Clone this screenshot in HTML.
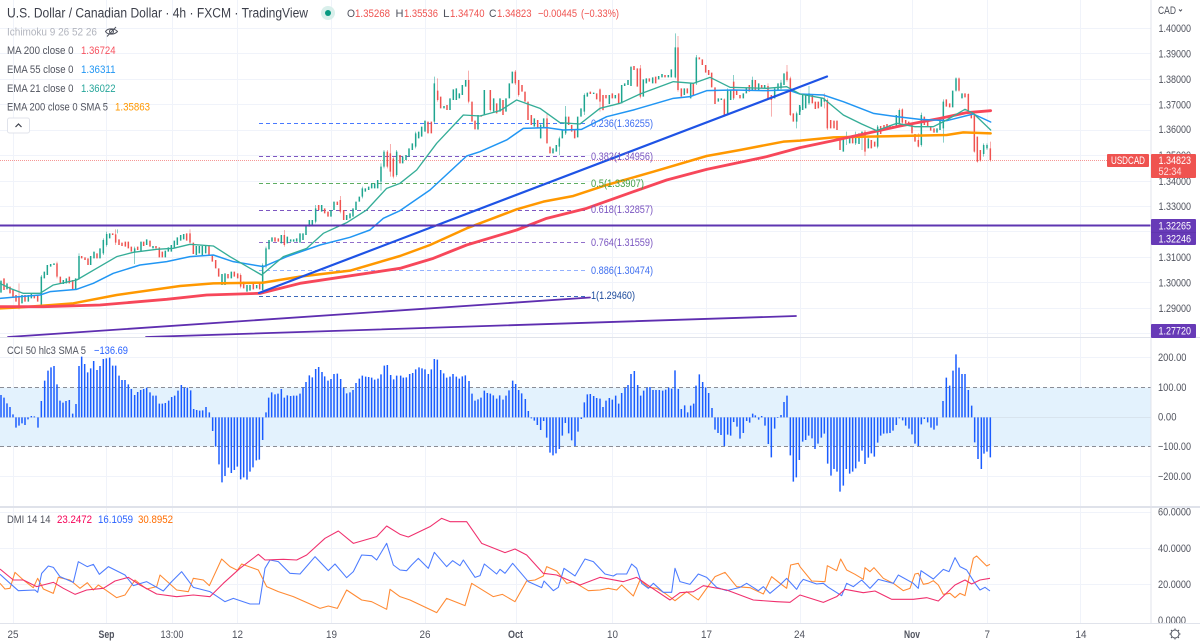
<!DOCTYPE html>
<html><head><meta charset="utf-8"><title>USDCAD</title>
<style>
html,body{margin:0;padding:0;background:#fff;width:1200px;height:643px;overflow:hidden}
svg{display:block}
text{font-family:"Liberation Sans",sans-serif;font-size:11px;fill:#50535e}
.w{fill:#fff}
</style></head><body>
<svg width="1200" height="643" viewBox="0 0 1200 643" xmlns="http://www.w3.org/2000/svg">
<defs>
<clipPath id="m"><rect x="0" y="0" width="1151" height="337"/></clipPath>
</defs>
<rect width="1200" height="643" fill="#fff"/>
<!-- grid -->
<path stroke="#f0f3fa" stroke-width="1" fill="none" d="M0 28.5H1151M0 53.5H1151M0 79.5H1151M0 104.5H1151M0 130.5H1151M0 155.5H1151M0 181.5H1151M0 206.5H1151M0 231.5H1151M0 257.5H1151M0 282.5H1151M0 308.5H1151M0 333.5H1151M0 357.5H1151M0 476.5H1151M0 512.5H1151M0 548.5H1151M0 584.5H1151M13.5 0V623M106.5 0V623M172.5 0V623M237.5 0V623M331.5 0V623M425.5 0V623M516.5 0V623M612.5 0V623M706.5 0V623M800.5 0V623M912.5 0V623M987.5 0V623M1080.5 0V623"/>
<!-- CCI band -->
<rect x="0" y="387.5" width="1151" height="59" fill="#e3f2fd"/>
<path d="M0 387.5H1151M0 446.5H1151" stroke="#8a8d96" stroke-width="1" stroke-dasharray="4 3" fill="none"/>
<path d="M0 417.5H1151" stroke="#d8e4ee" stroke-width="1"/>

<!-- last price line -->
<path d="M0 160.5H1107" stroke="#ef5350" stroke-width="1" stroke-dasharray="1 1" opacity=".6"/>

<!-- fib dashed -->
<g fill="none" stroke-width="1" stroke-dasharray="4 3" opacity=".85">
<path d="M259 123.5H586" stroke="#2962ff"/>
<path d="M259 156.5H586" stroke="#673ab7"/>
<path d="M259 183.5H586" stroke="#43a047"/>
<path d="M259 210.5H586" stroke="#673ab7"/>
<path d="M259 242.5H586" stroke="#7e57c2"/>
<path d="M259 270.5H586" stroke="#82a4ff"/>
<path d="M259 296.5H586" stroke="#1b4fb0"/>
</g>

<g clip-path="url(#m)">
<!-- candles group 1 -->
<g transform="scale(.33333)">
<path fill="none" stroke="#26a69a" stroke-width="2" opacity=".8" d="M124 825V918M237 760V840M404 740V792M788 790V875M798 740V805M353 688V700M1143 490V572M1152 450V505M1190 450V530M947 615V670M1087 560V595M310 715V765M320 695V740"/>
<path fill="none" stroke="#ef5350" stroke-width="2" opacity=".7" d="M57 850V928M347 688V735M570 688V730M853 690V740M1021 588V640M1171 432V530M1162 450V505M1180 470V535M171 785V835M722 820V865"/>
<path fill="none" stroke="#1fa590" stroke-width="4.5" d="M3 842V878M21 850V868M66 885V910M85 885V905M94 882V895M124 830V915M133 815V835M142 795V825M152 792V800M162 790V795M190 840V852M199 835V850M227 835V868M237 768V835M272 768V795M282 755V775M300 745V775M310 720V760M320 702V735M329 700V715M404 745V755M423 725V755M440 718V735M459 738V745M496 752V772M505 742V755M514 735V755M523 722V745M532 712V735M542 705V722M551 702V718M589 738V765M598 738V760M607 738V765M617 735V760M666 822V855M675 820V855M694 815V835M741 855V875M750 855V872M770 855V865M788 795V870M798 745V800M807 720V748M816 712V725M844 705V730M862 710V730M872 718V725M881 718V725M890 715V725M900 700V728M909 700V720M918 675V705M928 660V680M937 660V675M947 625V665M965 615V635M993 630V650M1002 605V630M1040 645V660M1050 640V655M1059 625V650M1068 605V630M1078 590V605M1087 565V590M1096 565V575M1106 560V570M1115 550V565M1124 550V565M1133 540V565M1143 500V545M1152 455V500M1190 455V525"/>
<path fill="none" stroke="#ef5350" stroke-width="4.5" d="M12 835V870M30 860V880M39 870V890M48 885V905M57 890V925M75 885V905M103 885V895M113 885V905M171 790V830M181 830V850M208 830V850M218 840V868M245 768V775M255 772V780M264 775V795M291 760V775M338 700V705M347 703V728M357 718V735M366 728V738M376 725V740M385 725V745M394 740V755M413 740V750M431 725V738M450 722V740M468 738V745M478 742V772M487 755V772M560 700V722M570 700V728M580 728V762M627 735V765M637 765V785M647 780V805M656 805V830M684 822V835M703 815V830M713 820V835M722 825V860M731 845V865M760 852V868M779 850V868M825 712V725M835 715V725M853 705V735M956 615V630M974 625V640M984 635V650M1012 605V615M1021 600V635M1031 630V660M1162 455V500M1171 460V515M1180 475V530"/>
</g>
<!-- candles group 2 -->
<g transform="translate(400,0) scale(.33333)">
<path fill="none" stroke="#26a69a" stroke-width="2" opacity=".8" d="M103 230V370M47 395V445M497 318V405M422 370V415M478 410V465M826 100V235M889 165V255M983 265V345M1190 335V385M1001 225V300M1057 230V272M1143 240V270M553 280V345"/>
<path fill="none" stroke="#ef5350" stroke-width="2" opacity=".7" d="M113 235V305M206 212V310M234 360V390M271 270V335M346 210V255M356 240V290M441 340V430M834 108V275M721 195V295M600 265V335M1104 250V300M1114 285V350M1161 195V245M1171 230V348M973 295V350M609 285V332"/>
<path fill="none" stroke="#1fa590" stroke-width="4.5" d="M8 470V490M18 465V480M27 445V470M37 430V450M47 400V440M56 395V415M65 380V410M75 362V395M103 250V365M132 318V325M150 295V330M160 268V300M169 265V300M178 280V295M187 255V285M197 240V260M234 345V388M253 270V345M281 295V335M300 295V335M318 295V335M328 250V295M337 215V250M403 355V380M422 375V415M431 355V385M459 445V460M469 435V455M478 415V440M487 390V415M497 350V400M533 350V412M543 325V350M553 285V335M562 278V290M581 278V282M628 285V312M646 285V295M665 255V310M674 250V258M684 240V255M693 200V258M730 238V290M739 235V250M758 232V250M776 228V238M786 222V232M805 225V232M814 208V232M826 142V232M853 265V285M872 248V295M889 172V250M955 295V305M964 295V300M983 272V340M992 270V300M1030 280V295M1039 262V280M1057 240V270M1076 250V270M1094 255V265M1124 265V295M1134 250V270M1143 248V265M1152 220V255M1190 340V365M1199 315V345"/>
<path fill="none" stroke="#ef5350" stroke-width="4.5" d="M0 465V490M84 365V400M94 365V400M113 272V300M122 290V325M141 315V330M206 240V305M216 305V365M225 362V388M244 345V350M271 270V330M290 310V340M309 300V345M346 215V250M356 240V285M366 255V275M375 275V305M384 305V360M394 345V375M413 360V385M441 355V430M450 440V460M506 350V375M515 375V395M524 390V415M571 275V282M590 280V298M600 268V305M609 285V330M618 285V295M637 280V295M656 280V310M702 198V210M712 205V260M721 205V290M748 235V245M767 230V250M795 225V232M834 142V270M844 265V290M862 265V280M880 250V285M898 172V178M907 178V195M917 195V218M926 210V225M935 218V262M945 262V312M973 298V345M1001 245V295M1010 270V285M1020 285V295M1048 255V275M1066 240V270M1085 255V265M1104 258V295M1114 285V300M1161 215V240M1171 235V345M1180 340V365"/>
</g>
<!-- candles group 3 -->
<g transform="translate(800,0) scale(.33333)">
<path fill="none" stroke="#26a69a" stroke-width="2" opacity=".8" d="M27 258V315M139 395V435M186 395V450M233 375V445M364 338V440M430 298V428M468 232V275M551 430V470M561 430V450M167 395V435"/>
<path fill="none" stroke="#ef5350" stroke-width="2" opacity=".7" d="M73 280V325M82 295V390M195 390V468M298 325V372M307 325V375M355 400V442M477 232V275M505 280V340M523 342V458M532 410V488M541 450V485M571 425V485"/>
<path fill="none" stroke="#1fa590" stroke-width="4.5" d="M0 320V335M8 285V330M17 285V325M27 280V310M64 295V320M73 295V305M130 410V455M149 410V430M167 410V430M177 400V432M186 395V405M205 415V445M233 380V440M289 345V378M298 330V370M364 345V435M411 385V398M420 355V390M430 305V385M458 272V322M468 235V272M486 280V295M551 435V462M561 435V445"/>
<path fill="none" stroke="#ef5350" stroke-width="4.5" d="M37 285V310M46 305V327M55 305V325M82 300V385M92 360V385M102 362V385M111 362V390M120 410V450M158 405V430M195 395V455M214 420V445M224 425V440M242 378V402M252 375V390M261 372V387M270 375V385M279 378V382M307 328V368M317 360V370M326 365V375M336 375V400M345 402V425M355 420V440M373 350V375M383 362V378M392 378V392M402 385V398M439 298V320M449 310V322M477 235V272M495 280V292M505 282V335M514 340V355M523 345V455M532 410V485M541 450V482M571 445V480"/>
</g>

<!-- moving averages -->
<g fill="none" stroke-linejoin="round" stroke-linecap="round">
<polyline transform="scale(.33333)" stroke="#ff9800" stroke-width="7.5" points="0,925 60,922 220,910 350,885 540,858 640,850 790,848 900,830 1050,812 1200,768 1290,735 1400,685 1550,628 1630,605 1720,588 1820,555 1960,515 2120,468 2220,450 2350,425 2400,422 2500,412 2600,410 2700,408 2840,405 2890,397 2972,400"/>
<polyline transform="scale(.33333)" stroke="#f7475a" stroke-width="8.5" points="0,920 130,920 300,915 500,898 620,885 780,880 900,850 1000,835 1200,805 1300,775 1400,735 1550,690 1640,655 1760,625 1900,575 2000,540 2120,508 2300,470 2400,443 2500,422 2600,400 2700,378 2820,355 2900,338 2972,332"/>
<polyline transform="scale(.33333)" stroke="#2196f3" stroke-width="4.5" points="0,895 60,890 120,885 150,875 230,868 280,850 340,820 420,795 500,785 570,770 640,765 700,785 790,800 860,770 960,735 1050,712 1110,690 1150,655 1200,632 1290,570 1400,468 1440,455 1520,420 1570,385 1640,383 1690,390 1745,388 1820,350 1900,330 2020,295 2070,290 2120,272 2200,270 2300,272 2365,270 2400,282 2470,285 2530,305 2620,340 2690,350 2760,358 2840,362 2920,342 2972,366"/>
<polyline transform="scale(.33333)" stroke="#35ad97" stroke-width="4" points="0,850 30,865 70,880 120,880 160,855 230,840 290,805 350,770 400,757 470,748 520,745 570,733 640,738 690,770 785,825 850,770 920,745 970,700 1040,668 1100,630 1160,565 1200,550 1250,510 1310,430 1390,345 1440,348 1500,332 1550,300 1620,325 1680,368 1740,372 1800,325 1860,310 1920,282 2020,245 2080,250 2130,232 2190,262 2300,265 2360,260 2400,282 2470,295 2530,345 2585,372 2630,392 2690,370 2745,380 2800,380 2840,360 2895,328 2920,340 2972,390"/>
<!-- trend + horizontal -->
<path d="M259 293L827 76.5" stroke="#1e53e5" stroke-width="2.2"/>
<path d="M8 337L590 297.5" stroke="#5e2eb0" stroke-width="1.8"/>
<path d="M146 337L796 316" stroke="#5e2eb0" stroke-width="1.8"/>
<path d="M0 225.5H1151" stroke="#5e35b1" stroke-width="2"/>
</g>
</g>

<!-- fib labels -->
<text x="591" y="127" textLength="62" lengthAdjust="spacingAndGlyphs" style="fill:#3f6ff0">0.236(1.36255)</text>
<text x="591" y="160" textLength="62" lengthAdjust="spacingAndGlyphs" style="fill:#7a55c0">0.382(1.34956)</text>
<text x="591" y="187" textLength="53" lengthAdjust="spacingAndGlyphs" style="fill:#43a047">0.5(1.33907)</text>
<text x="591" y="213" textLength="62" lengthAdjust="spacingAndGlyphs" style="fill:#7a55c0">0.618(1.32857)</text>
<text x="591" y="246" textLength="62" lengthAdjust="spacingAndGlyphs" style="fill:#7a55c0">0.764(1.31559)</text>
<text x="591" y="274" textLength="62" lengthAdjust="spacingAndGlyphs" style="fill:#3f6ff0">0.886(1.30474)</text>
<text x="591" y="299" textLength="44" lengthAdjust="spacingAndGlyphs" style="fill:#1b4a9c">1(1.29460)</text>

<!-- CCI bars -->
<g transform="translate(0,335) scale(.33333)"><path fill="none" stroke="#1a5cff" stroke-width="4.5" d="M3 247V180M12 247V188M21 247V205M30 247V216M39 247V238M48 247V278M57 247V272M66 247V265M75 247V270M84 247V253M94 247V243M103 247V244M114 247V278M124 247V198M134 247V137M144 247V107M153 247V97M162 247V93M171 247V148M180 247V197M189 247V203M198 247V198M208 247V195M218 247V236M228 247V207M237 247V93M245 247V65M254 247V87M263 247V112M272 247V100M281 247V78M291 247V105M300 247V93M310 247V72M319 247V70M329 247V68M338 247V92M347 247V92M357 247V122M366 247V135M375 247V135M385 247V148M394 247V162M404 247V180M413 247V171M422 247V165M431 247V162M440 247V158M450 247V172M459 247V182M468 247V182M478 247V206M487 247V206M496 247V204M506 247V197M515 247V186M524 247V182M534 247V167M544 247V150M553 247V158M562 247V158M572 247V166M581 247V222M590 247V225M599 247V227M608 247V226M618 247V216M628 247V232M638 247V288M647 247V335M657 247V388M666 247V442M675 247V423M685 247V398M694 247V414M703 247V405M712 247V395M722 247V433M731 247V427M741 247V434M750 247V410M759 247V397M769 247V376M778 247V374M788 247V315M798 247V232M806 247V188M815 247V172M825 247V178M834 247V176M844 247V162M853 247V188M862 247V181M872 247V183M881 247V182M890 247V182M900 247V176M909 247V157M918 247V141M928 247V121M937 247V127M947 247V102M956 247V96M966 247V111M974 247V124M984 247V137M993 247V132M1002 247V117M1012 247V116M1022 247V132M1031 247V158M1040 247V175M1050 247V172M1059 247V165M1068 247V144M1078 247V131M1087 247V122M1097 247V125M1106 247V126M1115 247V128M1124 247V134M1134 247V131M1143 247V118M1153 247V92M1162 247V90M1172 247V120M1181 247V133M1190 247V122"/></g>
<g transform="translate(400,335) scale(.33333)"><path fill="none" stroke="#1a5cff" stroke-width="4.5" d="M2 247V122M10 247V128M19 247V127M29 247V117M38 247V114M47 247V103M57 247V97M66 247V100M75 247V103M85 247V117M94 247V103M103 247V72M112 247V74M122 247V105M131 247V115M140 247V128M150 247V125M159 247V117M169 247V125M178 247V131M187 247V124M196 247V121M207 247V138M216 247V176M225 247V197M234 247V193M243 247V188M253 247V167M262 247V174M271 247V176M280 247V181M290 247V191M299 247V181M309 247V194M318 247V182M327 247V166M338 247V137M347 247V147M356 247V165M365 247V175M376 247V192M385 247V228M394 247V250M403 247V257M412 247V270M422 247V285M431 247V258M440 247V308M450 247V353M459 247V361M468 247V355M478 247V342M487 247V302M496 247V264M506 247V295M515 247V316M525 247V333M534 247V290M544 247V252M553 247V202M562 247V178M571 247V177M581 247V183M590 247V189M600 247V191M609 247V216M618 247V197M628 247V189M637 247V194M647 247V182M656 247V206M665 247V174M675 247V158M684 247V150M693 247V117M703 247V108M713 247V150M722 247V182M731 247V167M741 247V158M750 247V156M759 247V165M768 247V165M778 247V165M788 247V167M797 247V164M806 247V158M815 247V161M825 247V106M835 247V162M844 247V222M854 247V211M863 247V232M872 247V212M881 247V206M888 247V152M898 247V118M908 247V141M917 247V157M926 247V174M936 247V219M945 247V284M954 247V294M963 247V300M973 247V333M983 247V299M992 247V302M1001 247V261M1011 247V275M1020 247V311M1030 247V294M1040 247V258M1049 247V263M1058 247V236M1066 247V241M1076 247V254M1085 247V243M1095 247V272M1105 247V327M1114 247V367M1124 247V281M1133 247V249M1143 247V240M1152 247V201M1161 247V182M1171 247V361M1180 247V440M1189 247V427M1198 247V375"/></g>
<g transform="translate(800,335) scale(.33333)"><path fill="none" stroke="#1a5cff" stroke-width="4.5" d="M8 247V320M17 247V315M26 247V302M36 247V310M45 247V342M54 247V326M64 247V308M73 247V296M83 247V386M93 247V422M102 247V402M111 247V410M120 247V470M130 247V452M139 247V402M149 247V416M158 247V410M167 247V400M177 247V380M186 247V347M195 247V387M205 247V368M214 247V355M223 247V365M233 247V323M242 247V302M251 247V296M261 247V295M270 247V294M279 247V287M289 247V270M298 247V250M308 247V256M317 247V272M327 247V281M336 247V298M345 247V326M355 247V333M364 247V268M373 247V252M383 247V262M393 247V278M402 247V284M411 247V272M429 247V198M439 247V128M449 247V152M459 247V107M468 247V58M477 247V98M486 247V117M495 247V117M505 247V165M515 247V212M524 247V322M534 247V372M544 247V402M552 247V356M561 247V350M571 247V367"/></g>

<!-- DMI -->
<g fill="none" stroke-linejoin="round" stroke-width="3.2">
<g transform="translate(0,335) scale(.33333)">
<polyline stroke="#ff8a33" points="0,745 15,762 30,760 45,712 70,735 100,758 113,730 130,762 160,775 175,727 210,735 240,760 262,743 280,765 295,750 320,767 350,788 375,780 405,735 440,762 470,755 480,720 530,765 565,770 580,730 610,735 628,752 665,672 690,695 712,706 725,687 775,705 800,755 835,770 880,785 960,820 985,813 1012,820 1040,765 1085,795 1115,800 1160,823 1170,763 1200,785 1230,795 1310,833 1340,790 1395,812 1415,745 1480,785 1507,778 1545,800 1580,738 1605,735 1630,723 1640,695 1670,708 1700,745 1720,740 1765,767 1800,765 1825,760 1850,765 1865,750 1900,783 1920,735 1945,757 1970,760 1995,775 2025,797 2060,770 2095,795 2145,725 2175,712 2210,755 2250,758 2290,777 2315,725 2340,745 2360,760 2372,690 2395,685 2400,695 2435,738 2475,740 2482,692 2510,707 2522,672 2540,705 2565,718 2590,733 2595,698 2610,710 2622,698 2650,730 2680,745 2710,767 2730,760 2745,717 2755,715 2770,748 2785,745 2800,737 2815,750 2830,778 2850,775 2865,788 2880,775 2895,782 2920,670 2930,663 2960,693 2970,688"/>
<polyline stroke="#4d7cff" points="0,718 30,745 55,767 105,765 113,772 125,715 145,693 160,697 180,725 220,742 235,680 262,695 280,688 298,718 325,695 375,720 400,752 440,740 490,768 515,740 545,710 580,757 630,770 675,800 700,790 750,807 778,807 795,700 810,675 835,680 870,715 900,717 945,665 985,707 1005,687 1040,728 1060,710 1085,660 1115,662 1130,675 1160,625 1180,690 1200,705 1220,707 1235,690 1255,670 1285,700 1303,652 1340,695 1358,677 1380,692 1390,675 1425,727 1440,722 1453,687 1490,717 1500,703 1515,715 1538,685 1585,740 1625,758 1632,738 1660,767 1675,757 1692,700 1725,723 1755,672 1780,680 1815,717 1840,723 1850,717 1880,717 1895,687 1910,700 1925,745 1945,760 1960,745 1990,772 2015,772 2025,700 2040,740 2070,748 2095,717 2120,727 2150,757 2180,767 2220,757 2240,745 2275,767 2290,755 2310,775 2340,750 2360,730 2390,763 2400,745 2410,733 2450,747 2470,745 2485,757 2525,782 2540,745 2560,755 2585,735 2610,760 2635,733 2680,745 2695,720 2740,745 2755,760 2763,707 2800,732 2830,703 2847,710 2865,668 2880,695 2900,705 2925,745 2940,765 2955,757 2970,768"/>
<polyline stroke="#f0306e" points="0,702 40,735 70,735 110,755 160,742 190,760 225,778 260,765 310,760 345,738 385,727 420,750 470,777 530,785 580,780 630,785 670,745 720,700 775,658 795,675 850,673 890,675 920,660 975,610 1015,588 1060,625 1130,605 1160,573 1200,598 1225,606 1290,575 1325,550 1350,560 1400,560 1445,625 1515,653 1545,642 1580,660 1630,715 1670,720 1740,750 1800,727 1870,740 1910,727 1950,755 2010,795 2040,773 2080,770 2110,752 2180,765 2260,795 2330,800 2370,802 2400,780 2470,802 2510,785 2535,763 2590,773 2625,768 2675,793 2740,793 2780,788 2815,798 2865,750 2895,735 2915,747 2940,735 2970,730"/>
</g>
</g>

<!-- pane separators & axes -->
<rect x="0" y="337" width="1200" height="1" fill="#e0e3eb"/>
<rect x="0" y="506" width="1200" height="2" fill="#dfe2ea"/>
<rect x="1150.5" y="0" width="1" height="623" fill="#e0e3eb"/>
<rect x="0" y="623" width="1200" height="1" fill="#e0e3eb"/>

<!-- price axis -->
<text x="1158" y="14" textLength="18" lengthAdjust="spacingAndGlyphs">CAD</text>
<path d="M1179 9.5l1.5 1.5 1.5-1.5" fill="none" stroke="#50535e"/>
<g>
<text x="1158.5" y="32" textLength="32.5" lengthAdjust="spacingAndGlyphs">1.40000</text>
<text x="1158.5" y="57.5" textLength="32.5" lengthAdjust="spacingAndGlyphs">1.39000</text>
<text x="1158.5" y="83" textLength="32.5" lengthAdjust="spacingAndGlyphs">1.38000</text>
<text x="1158.5" y="108.5" textLength="32.5" lengthAdjust="spacingAndGlyphs">1.37000</text>
<text x="1158.5" y="133" textLength="32.5" lengthAdjust="spacingAndGlyphs">1.36000</text>
<text x="1158.5" y="159" textLength="32.5" lengthAdjust="spacingAndGlyphs">1.35000</text>
<text x="1158.5" y="185" textLength="32.5" lengthAdjust="spacingAndGlyphs">1.34000</text>
<text x="1158.5" y="210" textLength="32.5" lengthAdjust="spacingAndGlyphs">1.33000</text>
<text x="1158.5" y="261" textLength="32.5" lengthAdjust="spacingAndGlyphs">1.31000</text>
<text x="1158.5" y="286.5" textLength="32.5" lengthAdjust="spacingAndGlyphs">1.30000</text>
<text x="1158.5" y="312" textLength="32.5" lengthAdjust="spacingAndGlyphs">1.29000</text>
<text x="1158" y="361" textLength="28.5" lengthAdjust="spacingAndGlyphs">200.00</text>
<text x="1158" y="391" textLength="28.5" lengthAdjust="spacingAndGlyphs">100.00</text>
<text x="1158" y="420.5" textLength="18.5" lengthAdjust="spacingAndGlyphs">0.00</text>
<text x="1158" y="450" textLength="33" lengthAdjust="spacingAndGlyphs">−100.00</text>
<text x="1158" y="480" textLength="33" lengthAdjust="spacingAndGlyphs">−200.00</text>
<text x="1158" y="515.5" textLength="33" lengthAdjust="spacingAndGlyphs">60.0000</text>
<text x="1158" y="552" textLength="33" lengthAdjust="spacingAndGlyphs">40.0000</text>
<text x="1158" y="588" textLength="33" lengthAdjust="spacingAndGlyphs">20.0000</text>
<text x="1158" y="624" textLength="28" lengthAdjust="spacingAndGlyphs">0.0000</text>
</g>
<rect x="1151" y="623" width="49" height="3" fill="#fff"/>
<rect x="1151" y="623" width="49" height="1" fill="#e0e3eb"/>

<!-- tags -->
<rect x="1107" y="154" width="42" height="13" rx="1" fill="#ef5350"/>
<text x="1111" y="164" textLength="34" lengthAdjust="spacingAndGlyphs" style="fill:#fff">USDCAD</text>
<rect x="1151" y="154" width="45" height="24" rx="1" fill="#ef5350"/>
<text x="1158.5" y="164" textLength="32.5" lengthAdjust="spacingAndGlyphs" style="fill:#fff">1.34823</text>
<text x="1158.5" y="175" textLength="23" lengthAdjust="spacingAndGlyphs" style="fill:#ffe0e0">52:34</text>
<rect x="1151" y="219" width="45" height="26" rx="1" fill="#673ab7"/>
<path d="M1151 232.5H1196" stroke="#5a30a8" stroke-width=".6"/>
<text x="1158.5" y="229.5" textLength="32.5" lengthAdjust="spacingAndGlyphs" style="fill:#fff">1.32265</text>
<text x="1158.5" y="242.5" textLength="32.5" lengthAdjust="spacingAndGlyphs" style="fill:#fff">1.32246</text>
<rect x="1151" y="324" width="45" height="14" rx="1" fill="#673ab7"/>
<text x="1158.5" y="334.5" textLength="32.5" lengthAdjust="spacingAndGlyphs" style="fill:#fff">1.27720</text>

<!-- time axis -->
<g>
<text x="7.5" y="638" textLength="11" lengthAdjust="spacingAndGlyphs">25</text>
<text x="98.5" y="638" textLength="16" lengthAdjust="spacingAndGlyphs" style="font-weight:bold">Sep</text>
<text x="160.5" y="638" textLength="23" lengthAdjust="spacingAndGlyphs">13:00</text>
<text x="232" y="638" textLength="11" lengthAdjust="spacingAndGlyphs">12</text>
<text x="326" y="638" textLength="11" lengthAdjust="spacingAndGlyphs">19</text>
<text x="419.5" y="638" textLength="11" lengthAdjust="spacingAndGlyphs">26</text>
<text x="508" y="638" textLength="15" lengthAdjust="spacingAndGlyphs" style="font-weight:bold">Oct</text>
<text x="607" y="638" textLength="11" lengthAdjust="spacingAndGlyphs">10</text>
<text x="701" y="638" textLength="11" lengthAdjust="spacingAndGlyphs">17</text>
<text x="794" y="638" textLength="11" lengthAdjust="spacingAndGlyphs">24</text>
<text x="904" y="638" textLength="16" lengthAdjust="spacingAndGlyphs" style="font-weight:bold">Nov</text>
<text x="984.5" y="638" textLength="5.5" lengthAdjust="spacingAndGlyphs">7</text>
<text x="1075.5" y="638" textLength="11" lengthAdjust="spacingAndGlyphs">14</text>
</g>
<!-- gear -->
<g fill="none" stroke="#50535e" stroke-width="1">
<circle cx="1175" cy="634" r="4"/>
<path d="M1175 628.5v1.5M1175 638v1.5M1169.5 634h1.5M1179 634h1.5M1171 630l1 1M1178 637l1 1M1179 630l-1 1M1172 637l-1 1"/>
</g>

<!-- header -->
<text x="7" y="17.5" textLength="301" lengthAdjust="spacingAndGlyphs" style="font-size:13.5px;fill:#3c3f4a">U.S. Dollar / Canadian Dollar · 4h · FXCM · TradingView</text>
<circle cx="328" cy="13" r="7" fill="#d9efeb"/>
<circle cx="328" cy="13" r="3" fill="#089981"/>
<text x="347" y="17" textLength="8" lengthAdjust="spacingAndGlyphs">O</text>
<text x="355" y="17" textLength="35" lengthAdjust="spacingAndGlyphs" style="fill:#ef5350">1.35268</text>
<text x="395.5" y="17" textLength="8" lengthAdjust="spacingAndGlyphs">H</text>
<text x="404" y="17" textLength="34" lengthAdjust="spacingAndGlyphs" style="fill:#ef5350">1.35536</text>
<text x="443" y="17" textLength="6.5" lengthAdjust="spacingAndGlyphs">L</text>
<text x="450" y="17" textLength="34.5" lengthAdjust="spacingAndGlyphs" style="fill:#ef5350">1.34740</text>
<text x="489" y="17" textLength="7.5" lengthAdjust="spacingAndGlyphs">C</text>
<text x="497" y="17" textLength="34.5" lengthAdjust="spacingAndGlyphs" style="fill:#ef5350">1.34823</text>
<text x="538" y="17" textLength="39" lengthAdjust="spacingAndGlyphs" style="fill:#ef5350">−0.00445</text>
<text x="581" y="17" textLength="38" lengthAdjust="spacingAndGlyphs" style="fill:#ef5350">(−0.33%)</text>

<!-- legends -->
<text x="7" y="35.5" textLength="90" lengthAdjust="spacingAndGlyphs" style="fill:#b2b5be">Ichimoku 9 26 52 26</text>
<g fill="none" stroke="#50535e" stroke-width="1">
<path d="M105.5 31.5c2-3.5 9-3.5 12 0c-3 3.5-10 3.5-12 0z"/>
<circle cx="111.5" cy="31.5" r="2"/>
<path d="M107 36.5L116 27"/>
</g>
<text x="7" y="54" textLength="66.5" lengthAdjust="spacingAndGlyphs">MA 200 close 0</text>
<text x="81" y="54" textLength="34.5" lengthAdjust="spacingAndGlyphs" style="fill:#f7525f">1.36724</text>
<text x="7" y="73" textLength="66.5" lengthAdjust="spacingAndGlyphs">EMA 55 close 0</text>
<text x="81" y="73" textLength="34.5" lengthAdjust="spacingAndGlyphs" style="fill:#2196f3">1.36311</text>
<text x="7" y="92" textLength="66.5" lengthAdjust="spacingAndGlyphs">EMA 21 close 0</text>
<text x="81" y="92" textLength="34.5" lengthAdjust="spacingAndGlyphs" style="fill:#26a69a">1.36022</text>
<text x="7" y="110.5" textLength="101" lengthAdjust="spacingAndGlyphs">EMA 200 close 0 SMA 5</text>
<text x="115" y="110.5" textLength="35" lengthAdjust="spacingAndGlyphs" style="fill:#ff9800">1.35863</text>
<rect x="7.5" y="118" width="22" height="15" rx="2" fill="#fff" stroke="#e0e3eb"/>
<path d="M15.5 127l3-3 3 3" fill="none" stroke="#3c3f4a" stroke-width="1.2"/>
<text x="7" y="354" textLength="79" lengthAdjust="spacingAndGlyphs">CCI 50 hlc3 SMA 5</text>
<text x="94" y="354" textLength="34" lengthAdjust="spacingAndGlyphs" style="fill:#2962ff">−136.69</text>
<text x="7" y="523" textLength="43.5" lengthAdjust="spacingAndGlyphs">DMI 14 14</text>
<text x="57" y="523" textLength="35" lengthAdjust="spacingAndGlyphs" style="fill:#f50057">23.2472</text>
<text x="98" y="523" textLength="35" lengthAdjust="spacingAndGlyphs" style="fill:#2962ff">16.1059</text>
<text x="138" y="523" textLength="35" lengthAdjust="spacingAndGlyphs" style="fill:#ff6d00">30.8952</text>
</svg>
</body></html>
